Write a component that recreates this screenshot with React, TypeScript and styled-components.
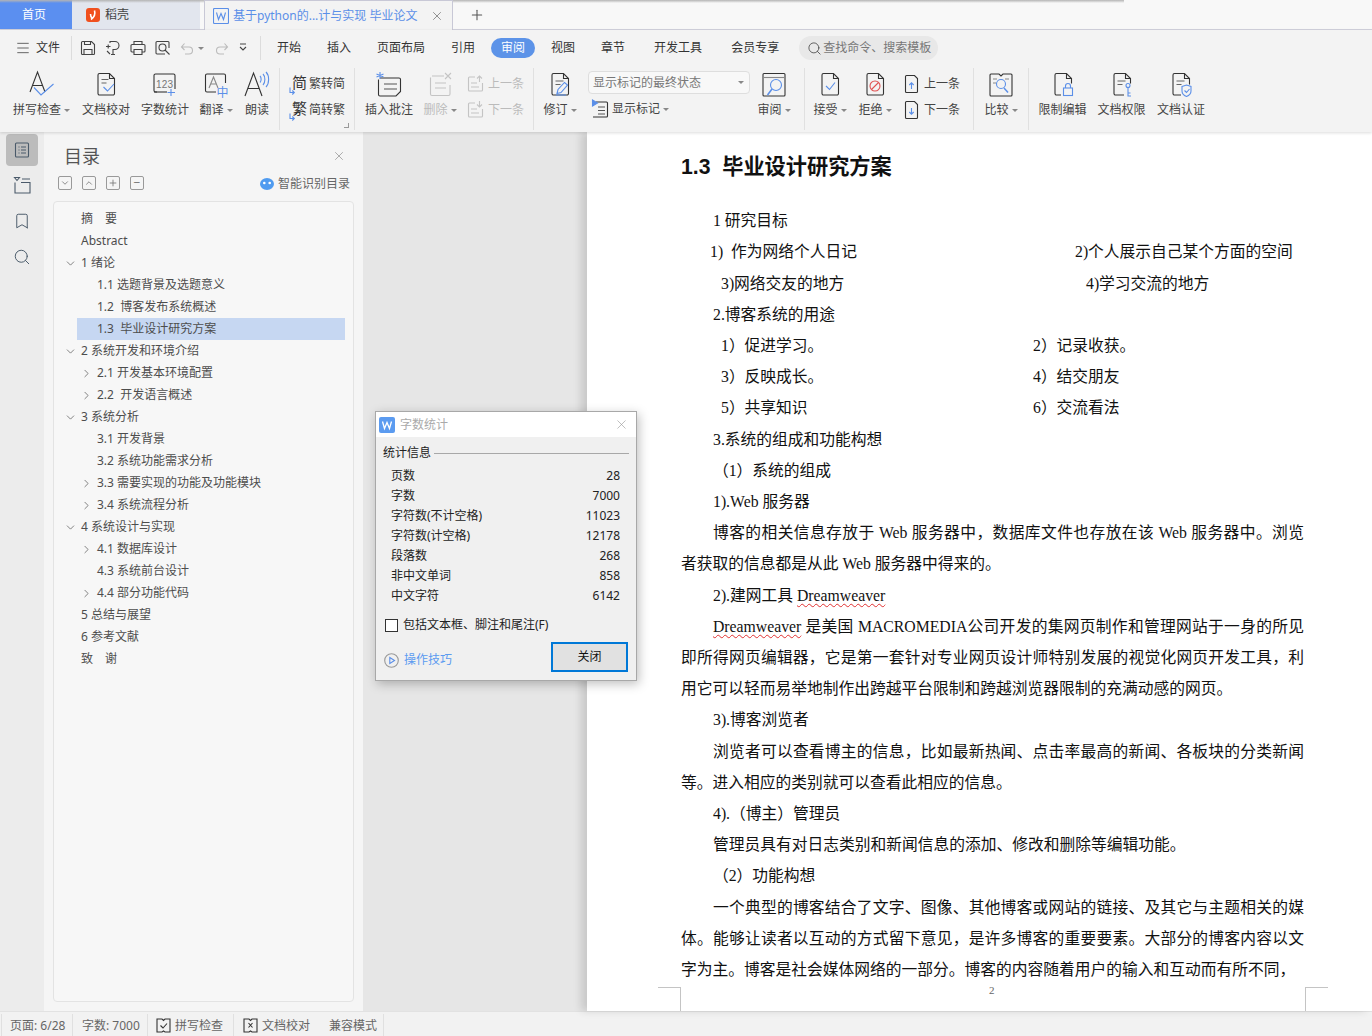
import React from "react";
import styled, { createGlobalStyle } from "styled-components";
import { ChevronDown, ChevronRight, Plus, X, Search, Bookmark, Menu as MenuIcon } from "lucide-react";

const BLUE = "#5b8fe8";
const UI = `"Noto Sans", "Noto Sans CJK SC", sans-serif`;
const DOC = `"Liberation Serif", "Noto Sans CJK SC", serif`;

const Global = createGlobalStyle`
  html, body { margin: 0; padding: 0; background: #f3f3f3; }
  #root { width: 1372px; height: 1036px; }
  svg { flex: none; }
`;

const Screen = styled.div`
  position: relative; width: 1372px; height: 1036px; overflow: hidden;
  display: flex; flex-direction: column; font: 12px/16px ${UI}; color: #444;
`;

/* ---------- tab strip ---------- */
const TabStrip = styled.div`
  position: relative; height: 29px; flex: none; display: flex; background: #f8f8f8;
  border-bottom: 1px solid #d2d2de;
`;
const TopShade = styled.div`
  position: absolute; left: 0; right: 248px; top: 0; height: 3px; pointer-events: none;
  background: linear-gradient(#b4b4b4, rgba(210,210,210,0));
`;
const HomeTab = styled.div`
  width: 72px; background: #5b8ff0; color: #fff; display: flex; align-items: center; justify-content: center; padding-right: 4px; box-sizing: border-box;
`;
const AppTab = styled.div`
  width: 128px; background: #e2e6ee; display: flex; align-items: center; gap: 5px; padding-left: 14px; box-sizing: border-box; color: #444;
`;
const DocTab = styled.div`
  position: relative; z-index: 1; margin-left: 4px; width: 249px; height: 30px; box-sizing: border-box; background: #f3f3f3;
  border: 1px solid #c8c8d6; border-bottom: none; display: flex; align-items: center; padding-left: 8px; gap: 4px; color: ${BLUE};
`;
const TabTitle = styled.span` width: 193px; white-space: pre; `;
const AddTab = styled.div` margin-left: 16px; display: flex; align-items: center; color: #555; `;

/* ---------- menu row ---------- */
const Toolbar = styled.div`
  position: relative; z-index: 2; flex: none; height: 102px; background: #f3f3f3; box-shadow: 0 1px 3px rgba(0,0,0,.14);
`;
const MenuRow = styled.div` height: 36px; display: flex; align-items: center; padding-left: 15px; box-sizing: border-box; `;
const FileBtn = styled.div` display: flex; align-items: center; gap: 5px; width: 56px; color: #333; `;
const MenuSep = styled.div` width: 1px; height: 24px; background: #dcdcdc; `;
const QuickBar = styled.div` display: flex; align-items: center; width: 188px; padding-left: 8px; box-sizing: border-box; gap: 9px; `;
const UndoGroup = styled.div` display: flex; align-items: center; gap: 4px; margin-right: 2px; `;
const MenuTabs = styled.div` display: flex; align-items: center; gap: 6px; padding-left: 6px; `;
const MenuTab = styled.div<{ $on?: boolean; $far?: boolean }>`
  height: 20px; line-height: 20px; padding: 0 10px; border-radius: 10px; color: ${p => p.$on ? "#fff" : "#333"};
  background: ${p => p.$on ? "#5c93e8" : "transparent"}; margin-left: ${p => p.$far ? 3 : 0}px;
`;
const SearchPill = styled.div`
  margin-left: 4px; width: 139px; height: 24px; box-sizing: border-box; border-radius: 12px; background: #e8e8e8; color: #777;
  display: flex; align-items: center; padding-left: 8px; gap: 1px;
`;

/* ---------- ribbon ---------- */
const Ribbon = styled.div` height: 66px; display: flex; padding-left: 7px; `;
const ToolCell = styled.div<{ $w: number; $off?: boolean }>`
  width: ${p => p.$w}px; flex: none; display: flex; flex-direction: column; align-items: center; padding-top: 4px; box-sizing: border-box;
  color: ${p => p.$off ? "#bbb" : "#444"};
`;
const ToolIcon = styled.div` height: 28px; display: flex; align-items: center; justify-content: center; `;
const ToolLabel = styled.div` margin-top: 4px; white-space: nowrap; display: flex; align-items: center; gap: 3px; `;
const Caret = styled.i`
  display: inline-block; width: 0; height: 0; border: 3px solid transparent; border-top: 3px solid #888; margin-top: 3px;
`;
const RibbonSep = styled.div<{ $ml?: number }>`
  width: 1px; height: 62px; margin: 2px 0 0 ${p => p.$ml ?? 0}px; background: #e0e0e0; flex: none;
`;
const StackCell = styled.div<{ $w: number; $pl: number }>`
  position: relative; width: ${p => p.$w}px; padding: 5px 0 0 ${p => p.$pl}px; box-sizing: border-box; flex: none;
`;
const StackRow = styled.div<{ $off?: boolean }>`
  height: 26px; display: flex; align-items: center; gap: 3px; white-space: nowrap; color: ${p => p.$off ? "#bbb" : "#444"};
`;
const FlipRow = styled(StackRow)` gap: 2px; `;
const FlipGlyph = styled.span`
  position: relative; width: 18px; height: 24px; flex: none; padding-left: 3px; box-sizing: border-box; font-size: 15px; line-height: 20px; color: #333;
  svg { position: absolute; left: 0; bottom: 0; }
`;
const Launcher = styled.i`
  position: absolute; right: 5px; bottom: 4px; width: 4px; height: 4px; border-right: 1px solid #999; border-bottom: 1px solid #999;
`;
const MarkCell = styled.div` width: 166px; flex: none; padding: 5px 0 0 2px; box-sizing: border-box; `;
const MarkSelect = styled.div`
  width: 162px; height: 23px; box-sizing: border-box; background: #f8f8f8; border: 1px solid #dedede; border-radius: 4px; color: #777;
  display: flex; align-items: center; justify-content: space-between; padding: 0 5px 0 4px;
`;
const MarkRow = styled.div` margin-top: 2px; height: 26px; display: flex; align-items: center; gap: 3px; padding-left: 3px; `;

/* ---------- body ---------- */
const Body = styled.div` flex: 1; display: flex; min-height: 0; `;
const Rail = styled.div`
  width: 44px; flex: none; background: #ececec; display: flex; flex-direction: column; align-items: flex-start; padding: 2px 0 0 6px; box-sizing: border-box;
`;
const RailBtn = styled.div<{ $on?: boolean; $mt?: number }>`
  width: 32px; height: 32px; border-radius: 4px; display: flex; align-items: center; justify-content: center; background: ${p => p.$on ? "#bcbcbc" : "transparent"};
  margin-top: ${p => p.$mt ?? 0}px; color: #4a5a6a;
`;
const Panel = styled.div`
  width: 319px; flex: none; background: #f5f5f5; padding: 0 9px 9px; box-sizing: border-box; display: flex; flex-direction: column;
`;
const PanelHead = styled.div` height: 44px; display: flex; align-items: center; justify-content: space-between; padding: 3px 8px 0 11px; box-sizing: border-box; `;
const PanelTitle = styled.div` font-size: 18px; line-height: 24px; color: #555; `;
const PanelTools = styled.div` height: 25px; display: flex; align-items: flex-start; padding: 0 3px 0 5px; `;
const SmallBtn = styled.div`
  width: 12px; height: 12px; border: 1px solid #999; border-radius: 2px; margin-right: 10px; display: flex; align-items: center; justify-content: center; color: #777;
`;
const SmartBtn = styled.div` margin-left: auto; display: flex; align-items: center; gap: 4px; color: #666; margin-right: 1px; `;
const TreeBox = styled.div` flex: 1; border: 1px solid #e3e3e3; border-radius: 4px; background: #f7f7f7; padding-top: 6px; `;
const TreeRow = styled.div<{ $lv: number; $sel?: boolean }>`
  position: relative; height: 22px; line-height: 22px; white-space: pre; color: #4d4d4d;
  margin: 0 8px 0 ${p => p.$sel ? 23 : 0}px;
  padding-left: ${p => (p.$sel ? 20 : 27 + (p.$lv - 1) * 16)}px;
  background: ${p => p.$sel ? "#c6d7f2" : "transparent"};
`;
const Twist = styled.span<{ $lv: number }>`
  position: absolute; left: ${p => 10 + (p.$lv - 1) * 16}px; top: 5px; display: flex; color: #444;
`;
const Workspace = styled.div` width: 224px; flex: none; background: #e6e6e6; `;
const Page = styled.div`
  position: relative; flex: 1; background: #fff; box-shadow: -6px 0 8px rgba(0,0,0,.13); padding: 20px 68px 0 94px; box-sizing: border-box;
  font: 15.75px/31.2px ${DOC}; color: #111; overflow: hidden;
`;
const DocHead = styled.div` font: bold 21.2px/30px "Liberation Sans", "Noto Sans CJK SC", sans-serif; margin-bottom: 23.2px; white-space: pre; color: #111; `;
const Line = styled.div<{ $in?: number; $full?: boolean }>`
  white-space: ${p => p.$full ? "normal" : "pre"}; padding-left: ${p => p.$in ?? 0}px;
  ${p => p.$full ? "text-align: justify; text-align-last: justify;" : ""}
`;
const TwoCol = styled.div<{ $in: number; $col: number }>`
  display: grid; grid-template-columns: ${p => p.$col}px 1fr; padding-left: ${p => p.$in}px; white-space: pre;
`;
const Wavy = styled.span` text-decoration: underline wavy #e03030 1px; text-underline-offset: 2px; `;
const CropMark = styled.i<{ $side: "l" | "r" }>`
  position: absolute; bottom: 0; width: 23px; height: 24px; box-sizing: border-box; border-top: 1px solid #c4c4c4;
  ${p => p.$side === "l" ? "left: 71px; border-right: 1px solid #c4c4c4;" : "left: 718px; border-left: 1px solid #c4c4c4;"}
`;
const PageNo = styled.span` position: absolute; left: 402px; bottom: 15px; font: 11px/12px ${DOC}; color: #666; `;

/* ---------- dialog ---------- */
const Dialog = styled.div`
  position: absolute; z-index: 5; left: 375px; top: 411px; width: 262px; height: 270px; box-sizing: border-box; background: #f0f0f0;
  border: 1px solid #a8a8a8; box-shadow: 2px 3px 10px rgba(0,0,0,.25); color: #222; display: flex; flex-direction: column;
`;
const DlgTitle = styled.div` height: 25px; flex: none; background: #fff; display: flex; align-items: center; padding: 0 7px 0 3px; gap: 5px; color: #aaa; `;
const DlgClose = styled.span` margin-left: auto; display: flex; color: #999; `;
const Legend = styled.div` margin: 8px 7px 0 7px; height: 16px; display: flex; align-items: center; gap: 3px; `;
const LegendRule = styled.i` flex: 1; height: 1px; background: #a8a8a8; `;
const StatList = styled.div` margin: 5px 16px 0 15px; `;
const StatRow = styled.div` height: 20px; line-height: 20px; display: flex; justify-content: space-between; `;
const CheckRow = styled.div` margin: 11px 0 0 9px; display: flex; align-items: center; gap: 5px; `;
const Box = styled.i` width: 13px; height: 13px; box-sizing: border-box; border: 1px solid #333; background: #fff; `;
const DlgFoot = styled.div` margin: 9px 8px 0 8px; display: flex; align-items: center; justify-content: space-between; `;
const Tips = styled.div` display: flex; align-items: center; gap: 5px; color: #5b9bf0; margin-top: 6px; `;
const CloseBtn = styled.div`
  width: 77px; height: 30px; box-sizing: border-box; border: 2px solid #0078d7; background: #e1e1e1; display: flex; align-items: center; justify-content: center; color: #111;
`;

/* ---------- status ---------- */
const Status = styled.div`
  height: 25px; flex: none; background: #f2f2f2; border-top: 1px solid #e2e2e2; box-sizing: border-box; display: flex; align-items: flex-end; color: #666; padding-left: 1px;
`;
const StatusCell = styled.div<{ $w: number; $pl: number }>`
  width: ${p => p.$w}px; height: 22px; box-sizing: border-box; padding: 1px 0 0 ${p => p.$pl}px; display: flex; align-items: center; gap: 4px; white-space: nowrap;
  border-left: 1px solid #e0e0e0;
`;
const StatusGap = styled.span` width: 11px; `;

/* ---------- drawn icons ---------- */
const Svg: React.FC<{ w?: number; h?: number; vb?: string; children: React.ReactNode }> = ({ w = 28, h = 28, vb, children }) => (
  <svg width={w} height={h} viewBox={vb ?? `0 0 ${w} ${h}`} fill="none" stroke="#333" strokeWidth="1.1">{children}</svg>
);
const Sheet = ({ c = "#333" }: { c?: string }) => (
  <path stroke={c} d="M7.5 3.5h10l5 5v15a1.5 1.5 0 0 1-1.500 1.500H7.500A1.500 1.500 0 0 1 6 23.500V5a1.500 1.500 0 0 1 1.500-1.500zM17.500 3.500v5h5" />
);
const MiniText = ({ c = "#666" }: { c?: string }) => <path stroke={c} d="M9.500 11h8M9.500 14.500h5" />;
const I = {
  Spell: () => <Svg w={26}><path d="M1 22 8.500 2 16 22M4 15.500h9" /><path stroke={BLUE} d="M5 17.500 12 25 24.500 14" /></Svg>,
  Proof: () => <Svg><Sheet /><path stroke="#666" d="M9.500 9.500h7M9.500 13h5" /><path stroke={BLUE} d="M11.500 17l4 4 6.500-7" /></Svg>,
  Count: () => <Svg><path d="M6 22H4.500A1.500 1.500 0 0 1 3 20.500v-15A1.500 1.500 0 0 1 4.500 4h18A1.500 1.500 0 0 1 24 5.500V19" /><path d="M3 22h13" /><text x="5" y="18" fontSize="10" fontFamily="Liberation Sans" fill="#777" stroke="none" textLength="17">123</text><path stroke={BLUE} d="M20 19v7M16.500 22.500H24" /></Svg>,
  Trans: () => <Svg><path d="M14 22H5a1.500 1.500 0 0 1-1.500-1.500v-15A1.500 1.500 0 0 1 5 4h17a1.500 1.500 0 0 1 1.500 1.500V13" /><path stroke="#888" d="M7 18 11.500 7 16 18M9 14h5" /><text x="14.500" y="26.500" fontSize="12" fontFamily="Noto Sans CJK SC" fill={BLUE} stroke="none">中</text></Svg>,
  Read: () => <Svg><path d="M2 26 10.500 3 19 26M5 18.500h11" /><path stroke={BLUE} d="M17 6c1.500 1.500 1.500 5 0 6.500M20 4c2.500 2.500 2.500 8.500 0 11M23 2c3.500 3.500 3.500 11.500 0 15" /></Svg>,
  Comment: () => <Svg w={30}><path d="M6 8h19a1.500 1.500 0 0 1 1.500 1.500v12L22 26H6a1.500 1.500 0 0 1-1.500-1.500V9.500" /><path d="M10 14h13M10 19h13" stroke="#555" /><path stroke={BLUE} d="M6 2v7M2.500 4l7 3M9.500 4l-7 3" /></Svg>,
  Delete: () => <Svg><g stroke="#c4c4c4"><path d="M6 6h12M24 15v9a1.500 1.500 0 0 1-1.500 1.500H6A1.500 1.500 0 0 1 4.500 24V7.500M9 13h11M9 18h11" /><path d="M19 3l6 6M25 3l-6 6" /></g></Svg>,
  Edit: () => <Svg><Sheet /><MiniText /><path stroke={BLUE} d="M11 23.500l1-4 6.500-7 3 2.500-6.500 7.500zM10 25h10" /></Svg>,
  Review: () => <Svg w={30}><path d="M5 3.500h20a1 1 0 0 1 1 1V25a1 1 0 0 1-1 1H5a1 1 0 0 1-1-1V4.500a1 1 0 0 1 1-1z" /><path stroke="#888" d="M4 7.500h22" /><circle cx="17" cy="15" r="5.500" stroke={BLUE} /><path stroke={BLUE} d="M13 19l-4.500 6" strokeWidth="1.600" /></Svg>,
  Accept: () => <Svg><Sheet /><path stroke={BLUE} d="M10 16l3.500 3.500 5.500-7" /></Svg>,
  Reject: () => <Svg><Sheet /><circle cx="14" cy="16" r="5" stroke="#e05252" /><path stroke="#e05252" d="M10.500 19.500l7-7" /></Svg>,
  Compare: () => <Svg w={30}><path d="M5 4h8l2 2 2-2h8a1 1 0 0 1 1 1v20a1 1 0 0 1-1 1H5a1 1 0 0 1-1-1V5a1 1 0 0 1 1-1z" /><path stroke="#888" d="M7 9h4M7 13h3M19 9h4" /><circle cx="15" cy="14" r="4.500" stroke={BLUE} /><path stroke={BLUE} d="M18 18l4 4.500" strokeWidth="1.500" /></Svg>,
  Lock: () => <Svg><path d="M12 25H7.500A1.500 1.500 0 0 1 6 23.500V5a1.500 1.500 0 0 1 1.500-1.500h10l5 5v5M17.500 3.500v5h5" /><rect x="14.500" y="18" width="9" height="7.500" stroke={BLUE} /><path stroke={BLUE} d="M16.500 18v-2a2.500 2.500 0 0 1 5 0v2" /></Svg>,
  Key: () => <Svg><path d="M16 25H7.500A1.500 1.500 0 0 1 6 23.500V5a1.500 1.500 0 0 1 1.500-1.500h10l5 5v5M17.500 3.500v5h5" /><MiniText /><circle cx="20" cy="15.500" r="2" stroke={BLUE} /><path stroke={BLUE} d="M20 17.500v9M20 23h2.500M20 26h3" /></Svg>,
  Cert: () => <Svg><path d="M14 25H7.500A1.500 1.500 0 0 1 6 23.500V5a1.500 1.500 0 0 1 1.500-1.500h10l5 5v6M17.500 3.500v5h5" /><MiniText /><path stroke={BLUE} d="M15 16.500l4.500-1.500 4.500 1.500V21c0 2.500-2 4.500-4.500 5.500-2.500-1-4.500-3-4.500-5.500zM17.500 20.500l2 2 3-3.500" /></Svg>,
  Flip: ({ glyph }: { glyph: string }) => <FlipGlyph>{glyph}<Svg w={7} h={9}><path stroke={BLUE} d="M1 .5v5h4M3.300 3.500l2 2-2 2" /></Svg></FlipGlyph>,
  Step: ({ up, off }: { up?: boolean; off?: boolean }) => {
    const c = off ? "#c4c4c4" : "#333"; const b = off ? "#c4c4c4" : BLUE;
    return <Svg w={18} h={20}>{off
      ? <><path stroke={c} d="M8 3H2.500A1 1 0 0 0 1.500 4v12a1 1 0 0 0 1 1h12a1 1 0 0 0 1-1V9M4 9h6M4 13h8" /><path stroke={b} d={up ? "M12.500 8V2M10 4.500 12.500 2 15 4.500" : "M12.500 1v6M10 4.500 12.500 7 15 4.500"} /></>
      : <><path stroke={c} d="M3.500 1.500h8l3 3v13a1 1 0 0 1-1 1h-10a1 1 0 0 1-1-1v-15a1 1 0 0 1 1-1z" /><path stroke={b} d={up ? "M8.500 15V9M6.300 11 8.500 8.800 10.700 11" : "M8.500 8v6M6.300 12 8.500 14.200 10.700 12"} /></>}</Svg>;
  },
  Mark: () => <Svg w={18} h={20}><path d="M5 3h10.500a1 1 0 0 1 1 1v13a1 1 0 0 1-1 1H2" /><path stroke="#555" d="M7 8h7M7 11.500h7M7 15h7" /><path d="M1.500 1v6l5-3z" fill={BLUE} stroke={BLUE} /></Svg>,
  Word: ({ filled }: { filled?: boolean }) => filled
    ? <Svg w={16} h={16}><rect x="0" y="0" width="16" height="16" rx="2" fill="#5b9bf0" stroke="none" /><path stroke="#fff" strokeWidth="1.300" d="M3.500 4.500l2 7 2.500-6 2.500 6 2-7" /></Svg>
    : <Svg w={16} h={16}><rect x=".5" y=".5" width="15" height="15" rx="1" stroke={BLUE} /><path stroke={BLUE} d="M3.500 4.500l2 7 2.500-6 2.500 6 2-7" /></Svg>,
  Daoke: () => <Svg w={14} h={14}><rect width="14" height="14" rx="3" fill="#f0501e" stroke="none" /><path stroke="#fff" strokeWidth="1.600" d="M8.500 2.500C9.500 6 8.500 9 5 11.500M4.500 6c0 2 .5 3 1.500 4" /></Svg>,
  Save: () => <Svg w={16} h={16}><path stroke="#444" d="M2.500 1.500h9l3 3v9a1 1 0 0 1-1 1h-11a1 1 0 0 1-1-1v-11a1 1 0 0 1 1-1zM4 14.500V9.500h8v5M4.500 1.500v3h6v-3" /></Svg>,
  SaveAs: () => <Svg w={16} h={16}><path stroke="#444" d="M5 3V1.500h5a4 4 0 0 1 0 8H8V14M1 6.500h4.500M3.200 4.500v4M6 14.500h4" /><path stroke="#444" d="M2 11l3 3" /></Svg>,
  Print: () => <Svg w={16} h={16}><path stroke="#444" d="M4 4.500v-3h8v3M4 12H2a1 1 0 0 1-1-1V5.500a1 1 0 0 1 1-1h12a1 1 0 0 1 1 1V11a1 1 0 0 1-1 1h-2M4 9.500h8v5H4z" /></Svg>,
  Preview: () => <Svg w={16} h={16}><path stroke="#444" d="M10 14H2a1 1 0 0 1-1-1V2.500a1 1 0 0 1 1-1h11a1 1 0 0 1 1 1V8" /><circle cx="7.500" cy="7.500" r="3.500" stroke="#444" /><path stroke="#444" d="M10 10l4.500 4.500" /></Svg>,
  Undo: () => <Svg w={14} h={14}><path stroke="#bbb" d="M1.500 6H9a3.500 3.500 0 0 1 0 7H5M4.500 2.500 1.500 6l3 3" /></Svg>,
  Redo: () => <Svg w={14} h={14}><path stroke="#bbb" d="M12.500 6H5a3.500 3.500 0 0 0 0 7h4M9.500 2.500l3 3.500-3 3" /></Svg>,
  More: () => <Svg w={10} h={12}><path stroke="#444" d="M2 2h6M2 5l3 3 3-3" /></Svg>,
  Outline: () => <Svg w={18} h={18}><path stroke="#4a5a6a" d="M3.500 2h11a1 1 0 0 1 1 1v12a1 1 0 0 1-1 1h-11a1 1 0 0 1-1-1V3a1 1 0 0 1 1-1zM5.500 6h1M8 6h5M5.500 9h1M8 9h5M5.500 12h1M8 12h5" /></Svg>,
  Tree: () => <Svg w={18} h={18}><path stroke="#4a5a6a" d="M2 6.500V17h15V6.500H8M9 3h8" /><path stroke="#4a5a6a" d="M1.500 1.500h5l-2.500 3z" /></Svg>,
  Smart: () => <Svg w={14} h={12}><ellipse cx="7" cy="6" rx="7" ry="6" fill="#4f9bf0" stroke="none" /><circle cx="4.300" cy="5" r="1.300" fill="#fff" stroke="none" /><circle cx="9.700" cy="5" r="1.300" fill="#fff" stroke="none" /></Svg>,
  Play: () => <Svg w={15} h={15}><circle cx="7.500" cy="7.500" r="6.800" stroke="#999" /><path stroke={BLUE} d="M5.800 4.500 10.500 7.500 5.800 10.500z" /></Svg>,
  StatusCheck: ({ x }: { x?: boolean }) => <Svg w={15} h={15}><path stroke="#333" d="M1 1h5l1.500 1.500L9 1h5v13H9l-1.500-1L6 14H1z" /><path stroke="#333" d={x ? "M5.500 5l4 4.500M9.500 5l-4 4.500" : "M4.500 7.500l2.500 2.500 4-4.500"} /></Svg>,
};

/* ---------- parts ---------- */
const Tool: React.FC<{ w: number; label: string; caret?: boolean; off?: boolean; children: React.ReactNode }> = ({ w, label, caret, off, children }) => (
  <ToolCell $w={w} $off={off}>
    <ToolIcon>{children}</ToolIcon>
    <ToolLabel>{label}{caret && <Caret />}</ToolLabel>
  </ToolCell>
);

const toc: { lv: number; t: string; tw?: "d" | "r"; sel?: boolean }[] = [
  { lv: 1, t: "摘　要" }, { lv: 1, t: "Abstract" }, { lv: 1, t: "1 绪论", tw: "d" },
  { lv: 2, t: "1.1 选题背景及选题意义" }, { lv: 2, t: "1.2  博客发布系统概述" }, { lv: 2, t: "1.3  毕业设计研究方案", sel: true },
  { lv: 1, t: "2 系统开发和环境介绍", tw: "d" }, { lv: 2, t: "2.1 开发基本环境配置", tw: "r" }, { lv: 2, t: "2.2  开发语言概述", tw: "r" },
  { lv: 1, t: "3 系统分析", tw: "d" }, { lv: 2, t: "3.1 开发背景" }, { lv: 2, t: "3.2 系统功能需求分析" },
  { lv: 2, t: "3.3 需要实现的功能及功能模块", tw: "r" }, { lv: 2, t: "3.4 系统流程分析", tw: "r" },
  { lv: 1, t: "4 系统设计与实现", tw: "d" }, { lv: 2, t: "4.1 数据库设计", tw: "r" }, { lv: 2, t: "4.3 系统前台设计" }, { lv: 2, t: "4.4 部分功能代码", tw: "r" },
  { lv: 1, t: "5 总结与展望" }, { lv: 1, t: "6 参考文献" }, { lv: 1, t: "致　谢" },
];
const stats = [["页数", "28"], ["字数", "7000"], ["字符数(不计空格)", "11023"], ["字符数(计空格)", "12178"], ["段落数", "268"], ["非中文单词", "858"], ["中文字符", "6142"]];
const tabs = ["开始", "插入", "页面布局", "引用", "审阅", "视图", "章节", "开发工具", "会员专享"];

export default function App() {
  return (
    <Screen>
      <Global />
      <TabStrip>
        <HomeTab>首页</HomeTab>
        <AppTab><I.Daoke />稻壳</AppTab>
        <DocTab><I.Word /><TabTitle>基于python的...计与实现 毕业论文</TabTitle><X size={14} strokeWidth={1.2} color="#666" /></DocTab>
        <AddTab><Plus size={16} strokeWidth={1.6} /></AddTab>
        <TopShade />
      </TabStrip>
      <Toolbar>
        <MenuRow>
          <FileBtn><MenuIcon size={16} strokeWidth={1.1} />文件</FileBtn>
          <MenuSep />
          <QuickBar>
            <I.Save /><I.SaveAs /><I.Print /><I.Preview />
            <UndoGroup><I.Undo /><Caret /></UndoGroup>
            <I.Redo /><I.More />
          </QuickBar>
          <MenuSep />
          <MenuTabs>
            {tabs.map((t, i) => <MenuTab key={t} $on={t === "审阅"} $far={i >= 7}>{t}</MenuTab>)}
            <SearchPill><Search size={15} strokeWidth={1.3} color="#444" />查找命令、搜索模板</SearchPill>
          </MenuTabs>
        </MenuRow>
        <Ribbon>
          <Tool w={69} label="拼写检查" caret><I.Spell /></Tool>
          <Tool w={60} label="文档校对"><I.Proof /></Tool>
          <Tool w={58} label="字数统计"><I.Count /></Tool>
          <Tool w={44} label="翻译" caret><I.Trans /></Tool>
          <Tool w={38} label="朗读"><I.Read /></Tool>
          <RibbonSep $ml={3} />
          <StackCell $w={74} $pl={9}>
            <FlipRow><I.Flip glyph="简" />繁转简</FlipRow>
            <FlipRow><I.Flip glyph="繁" />简转繁</FlipRow>
            <Launcher />
          </StackCell>
          <RibbonSep />
          <Tool w={68} label="插入批注"><I.Comment /></Tool>
          <Tool w={34} label="删除" caret off><I.Delete /></Tool>
          <StackCell $w={76} $pl={10}>
            <StackRow $off><I.Step up off />上一条</StackRow>
            <StackRow $off><I.Step off />下一条</StackRow>
          </StackCell>
          <RibbonSep />
          <Tool w={52} label="修订" caret><I.Edit /></Tool>
          <MarkCell>
            <MarkSelect>显示标记的最终状态<Caret /></MarkSelect>
            <MarkRow><I.Mark />显示标记<Caret /></MarkRow>
          </MarkCell>
          <Tool w={44} label="审阅" caret><I.Review /></Tool>
          <RibbonSep $ml={8} />
          <Tool w={50} label="接受" caret><I.Accept /></Tool>
          <Tool w={40} label="拒绝" caret><I.Reject /></Tool>
          <StackCell $w={78} $pl={8}>
            <StackRow><I.Step up />上一条</StackRow>
            <StackRow><I.Step />下一条</StackRow>
          </StackCell>
          <RibbonSep />
          <Tool w={54} label="比较" caret><I.Compare /></Tool>
          <RibbonSep />
          <Tool w={67} label="限制编辑"><I.Lock /></Tool>
          <Tool w={51} label="文档权限"><I.Key /></Tool>
          <Tool w={68} label="文档认证"><I.Cert /></Tool>
        </Ribbon>
      </Toolbar>
      <Body>
        <Rail>
          <RailBtn $on><I.Outline /></RailBtn>
          <RailBtn $mt={3}><I.Tree /></RailBtn>
          <RailBtn $mt={4}><Bookmark size={18} strokeWidth={1.3} /></RailBtn>
          <RailBtn $mt={4}><Search size={18} strokeWidth={1.3} /></RailBtn>
        </Rail>
        <Panel>
          <PanelHead>
            <PanelTitle>目录</PanelTitle>
            <X size={14} strokeWidth={1} color="#777" />
          </PanelHead>
          <PanelTools>
            <SmallBtn><ChevronDown size={10} /></SmallBtn>
            <SmallBtn><ChevronDown size={10} style={{ transform: "rotate(180deg)" }} /></SmallBtn>
            <SmallBtn><Plus size={10} /></SmallBtn>
            <SmallBtn>−</SmallBtn>
            <SmartBtn><I.Smart />智能识别目录</SmartBtn>
          </PanelTools>
          <TreeBox>
            {toc.map(r => (
              <TreeRow key={r.t} $lv={r.lv} $sel={r.sel}>
                {r.tw && <Twist $lv={r.lv}>{r.tw === "d" ? <ChevronDown size={13} strokeWidth={1.2} /> : <ChevronRight size={13} strokeWidth={1.2} />}</Twist>}
                {r.t}
              </TreeRow>
            ))}
          </TreeBox>
        </Panel>
        <Workspace />
        <Page>
          <DocHead>1.3  毕业设计研究方案</DocHead>
          <Line $in={32}>1 研究目标</Line>
          <TwoCol $in={29} $col={365}><span>1)  作为网络个人日记</span><span>2)个人展示自己某个方面的空间</span></TwoCol>
          <TwoCol $in={40} $col={365}><span>3)网络交友的地方</span><span>4)学习交流的地方</span></TwoCol>
          <Line $in={32}>2.博客系统的用途</Line>
          <TwoCol $in={40} $col={312}><span>1）促进学习。</span><span>2）记录收获。</span></TwoCol>
          <TwoCol $in={40} $col={312}><span>3）反映成长。</span><span>4）结交朋友</span></TwoCol>
          <TwoCol $in={40} $col={312}><span>5）共享知识</span><span>6）交流看法</span></TwoCol>
          <Line $in={32}>3.系统的组成和功能构想</Line>
          <Line $in={32}>（1）系统的组成</Line>
          <Line $in={32}>1).Web 服务器</Line>
          <Line $in={32} $full>博客的相关信息存放于 Web 服务器中，数据库文件也存放在该 Web 服务器中。浏览</Line>
          <Line>者获取的信息都是从此 Web 服务器中得来的。</Line>
          <Line $in={32}>2).建网工具 <Wavy>Dreamweaver</Wavy></Line>
          <Line $in={32} $full><Wavy>Dreamweaver</Wavy> 是美国 MACROMEDIA公司开发的集网页制作和管理网站于一身的所见</Line>
          <Line $full>即所得网页编辑器，它是第一套针对专业网页设计师特别发展的视觉化网页开发工具，利</Line>
          <Line>用它可以轻而易举地制作出跨越平台限制和跨越浏览器限制的充满动感的网页。</Line>
          <Line $in={32}>3).博客浏览者</Line>
          <Line $in={32} $full>浏览者可以查看博主的信息，比如最新热闻、点击率最高的新闻、各板块的分类新闻</Line>
          <Line>等。进入相应的类别就可以查看此相应的信息。</Line>
          <Line $in={32}>4).（博主）管理员</Line>
          <Line $in={32}>管理员具有对日志类别和新闻信息的添加、修改和删除等编辑功能。</Line>
          <Line $in={32}>（2）功能构想</Line>
          <Line $in={32} $full>一个典型的博客结合了文字、图像、其他博客或网站的链接、及其它与主题相关的媒</Line>
          <Line $full>体。能够让读者以互动的方式留下意见，是许多博客的重要要素。大部分的博客内容以文</Line>
          <Line>字为主。博客是社会媒体网络的一部分。博客的内容随着用户的输入和互动而有所不同，</Line>
          <CropMark $side="l" />
          <CropMark $side="r" />
          <PageNo>2</PageNo>
        </Page>
      </Body>
      <Status>
        <StatusCell $w={71} $pl={8}>页面: 6/28</StatusCell>
        <StatusCell $w={75} $pl={9}>字数: 7000</StatusCell>
        <StatusCell $w={86} $pl={8}><I.StatusCheck />拼写检查</StatusCell>
        <StatusCell $w={150} $pl={9}><I.StatusCheck x />文档校对<StatusGap />兼容模式</StatusCell>
        <StatusCell $w={1} $pl={0} />
      </Status>
      <Dialog>
        <DlgTitle><I.Word filled />字数统计<DlgClose><X size={15} strokeWidth={1} /></DlgClose></DlgTitle>
        <Legend>统计信息<LegendRule /></Legend>
        <StatList>
          {stats.map(([k, v]) => <StatRow key={k}><span>{k}</span><span>{v}</span></StatRow>)}
        </StatList>
        <CheckRow><Box />包括文本框、脚注和尾注(F)</CheckRow>
        <DlgFoot>
          <Tips><I.Play />操作技巧</Tips>
          <CloseBtn>关闭</CloseBtn>
        </DlgFoot>
      </Dialog>
    </Screen>
  );
}
